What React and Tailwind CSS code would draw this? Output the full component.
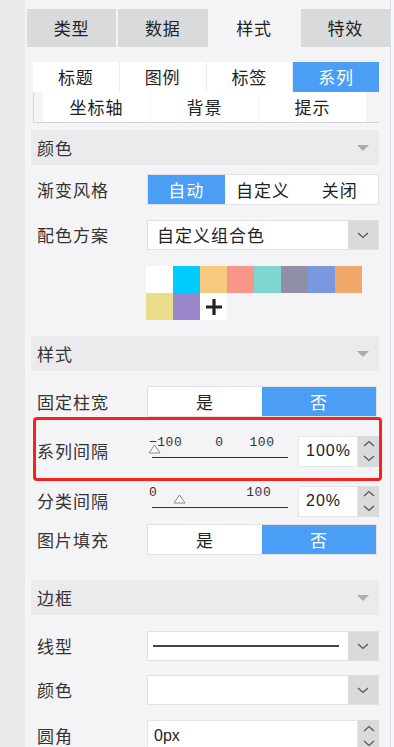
import React from "react";

const cjk = { fontFamily: '"Noto Sans CJK SC", "Liberation Sans", sans-serif' };

const swatches = [
    "#ffffff", "#00ccff", "#f8ca80", "#f8968a", "#7fd6d0", "#8f8fa6", "#7a98e0", "#f0a86a",
    "#ebdd8a", "#9b88cc",
];

function Chevron({ up = false }) {
    return (
        <svg width="12" height="7" viewBox="0 0 12 7" className="block">
            <path
                d={up ? "M1 6 L6 1.5 L11 6" : "M1 1 L6 5.5 L11 1"}
                fill="none"
                stroke="#555"
                strokeWidth="1.3"
            />
        </svg>
    );
}

function SectionHeader({ title, className = "" }) {
    return (
        <div className={`flex items-center justify-between h-[35px] bg-[#ebebed] pl-[6px] pr-[10px] ${className}`}>
            <span className="text-[17px] tracking-[1px] text-[#333]">{title}</span>
            <svg width="12" height="6" viewBox="0 0 12 6">
                <path d="M0 0 L12 0 L6 6 Z" fill="#acacac" />
            </svg>
        </div>
    );
}

function Row({ label, className = "", children }) {
    return (
        <div className={`flex items-center ${className}`}>
            <div className="w-[116px] pl-[6px] text-[17px] tracking-[1px] text-[#333]">{label}</div>
            <div className="w-[232px]">{children}</div>
        </div>
    );
}

function Segmented({ items, active }) {
    return (
        <div className="flex h-[31px] bg-white border border-[#e2e2e4]">
            {items.map((t, i) => (
                <div
                    key={t}
                    className={`flex-1 flex items-center justify-center text-[17px] tracking-[1px] ${
                        i === active ? "bg-[#4a9ef5] text-white" : "text-[#222]"
                    }`}
                >
                    {t}
                </div>
            ))}
        </div>
    );
}

function Select({ children }) {
    return (
        <div className="flex h-[30px] bg-white border border-[#e2e2e4]">
            <div className="flex-1 flex items-center pl-[9px] text-[17px] tracking-[1px] text-[#222]">{children}</div>
            <div className="w-[30px] bg-[#d9dadc] flex items-center justify-center">
                <Chevron />
            </div>
        </div>
    );
}

function Spinner() {
    return (
        <div className="w-[21px] bg-[#d9dadc] flex flex-col items-center justify-center gap-[8px]">
            <Chevron up />
            <Chevron />
        </div>
    );
}

function Thumb({ left }) {
    return (
        <svg width="13" height="10" viewBox="0 0 13 10" className={`absolute top-[9px] ${left}`}>
            <path d="M6.5 1 L12 9 L1 9 Z" fill="#fff" stroke="#888" strokeWidth="1" />
        </svg>
    );
}

function SliderRow({ label, ticks, thumbLeft, value, className = "" }) {
    return (
        <Row label={label} className={className}>
            <div className="flex items-center">
                <div className="relative w-[140px] h-[32px] ml-[1px]">
                    <div
                        className="absolute top-[1px] left-[1px] right-0 h-[14px] text-[13px] tracking-[0.5px] leading-[14px] text-[#333]"
                        style={{ fontFamily: '"Liberation Mono", monospace' }}
                    >
                        {ticks}
                    </div>
                    <div className="absolute top-[22px] left-[4px] right-0 h-px bg-[#333]" />
                    <Thumb left={thumbLeft} />
                </div>
                <div className="ml-[10px] flex h-[31px]">
                    <div
                        className="w-[60px] bg-white border border-[#e6e6e8] flex items-center pl-[7px] text-[16px] tracking-[1px] text-[#222]"
                        style={{ fontFamily: '"Liberation Sans", sans-serif' }}
                    >
                        {value}
                    </div>
                    <Spinner />
                </div>
            </div>
        </Row>
    );
}

export default function App() {
    return (
        <div className="flex w-[394px] h-[747px] overflow-hidden bg-[#f8f8f8]" style={cjk}>
            {/* left strip */}
            <div className="w-[25px] shrink-0 bg-[#e9e9e9]" />

            {/* panel */}
            <div className="w-[366px] shrink-0 bg-[#f4f4f6] border-r border-[#dcdcdc] overflow-hidden">
                {/* main tabs */}
                <div className="grid grid-cols-4 gap-[2px] mt-[9px] ml-[2px] h-[38px]">
                    {["类型", "数据", "样式", "特效"].map((t, i) => (
                        <div
                            key={t}
                            className={`flex items-center justify-center text-[17px] tracking-[1px] text-[#222] ${
                                i === 2 ? "bg-[#f4f4f6]" : "bg-[#d9dadc]"
                            }`}
                        >
                            {t}
                        </div>
                    ))}
                </div>

                <div className="ml-[6px] w-[348px]">
                    {/* sub tabs */}
                    <div className="ml-[2px] mt-[15px] w-[346px]">
                        <div className="grid grid-cols-4 gap-[1px] h-[30px] bg-[#ececee]">
                            {["标题", "图例", "标签", "系列"].map((t, i) => (
                                <div
                                    key={t}
                                    className={`flex items-center justify-center text-[17px] tracking-[1px] ${
                                        i === 3 ? "bg-[#4a9ef5] text-white" : "bg-white text-[#222]"
                                    }`}
                                >
                                    {t}
                                </div>
                            ))}
                        </div>
                        <div className="flex gap-[1px] pl-[9px] h-[31px] border-l border-b border-[#d4d4d6]">
                            {["坐标轴", "背景", "提示"].map((t) => (
                                <div
                                    key={t}
                                    className="w-[107px] bg-white flex items-center justify-center text-[17px] tracking-[1px] text-[#222]"
                                >
                                    {t}
                                </div>
                            ))}
                        </div>
                    </div>

                    {/* 颜色 */}
                    <SectionHeader title="颜色" className="mt-[7px]" />
                    <Row label="渐变风格" className="mt-[9px]">
                        <Segmented items={["自动", "自定义", "关闭"]} active={0} />
                    </Row>
                    <Row label="配色方案" className="mt-[15px]">
                        <Select>自定义组合色</Select>
                    </Row>
                    <div className="ml-[115px] mt-[16px] grid grid-cols-[repeat(8,27px)] w-[216px]">
                        {swatches.map((c, i) => (
                            <div key={i} className="h-[27px]" style={{ backgroundColor: c }} />
                        ))}
                        <div className="h-[27px] bg-white flex items-center justify-center">
                            <svg width="22" height="22" viewBox="0 0 22 22">
                                <path d="M11 3 V19 M3 11 H19" stroke="#222" strokeWidth="3.2" />
                            </svg>
                        </div>
                    </div>

                    {/* 样式 */}
                    <SectionHeader title="样式" className="mt-[16px]" />
                    <Row label="固定柱宽" className="mt-[15px]">
                        <div className="w-[230px]">
                            <Segmented items={["是", "否"]} active={1} />
                        </div>
                    </Row>
                    <div className="relative pt-[18px] pb-[15px]">
                        <SliderRow
                            label="系列间隔"
                            ticks={
                                <div className="flex">
                                    <span>−100</span>
                                    <span className="ml-[33px]">0</span>
                                    <span className="ml-[26px]">100</span>
                                </div>
                            }
                            thumbLeft="left-0"
                            value="100%"
                        />
                        <div className="absolute left-[2px] right-[-3px] top-0 h-[64px] border-[3px] border-[#f5231d] rounded-[4px]" />
                    </div>
                    <SliderRow
                        label="分类间隔"
                        className="mt-[3px]"
                        ticks={
                            <div className="flex">
                                <span>0</span>
                                <span className="ml-[89px]">100</span>
                            </div>
                        }
                        thumbLeft="left-[25px]"
                        value="20%"
                    />
                    <Row label="图片填充" className="mt-[7px]">
                        <div className="w-[230px]">
                            <Segmented items={["是", "否"]} active={1} />
                        </div>
                    </Row>

                    {/* 边框 */}
                    <SectionHeader title="边框" className="mt-[25px]" />
                    <Row label="线型" className="mt-[16px]">
                        <Select>
                            <div className="w-[186px] h-[2px] bg-[#444] -ml-[4px]" />
                        </Select>
                    </Row>
                    <Row label="颜色" className="mt-[14px]">
                        <Select />
                    </Row>
                    <Row label="圆角" className="mt-[15px]">
                        <div className="flex h-[31px]">
                            <div
                                className="w-[211px] bg-white border border-[#e6e6e8] flex items-center pl-[6px] text-[16px] text-[#222]"
                                style={{ fontFamily: '"Liberation Sans", sans-serif' }}
                            >
                                0px
                            </div>
                            <Spinner />
                        </div>
                    </Row>
                </div>
            </div>

            {/* right strip */}
            <div className="flex-1 bg-[#f8f8f8]" />
        </div>
    );
}
